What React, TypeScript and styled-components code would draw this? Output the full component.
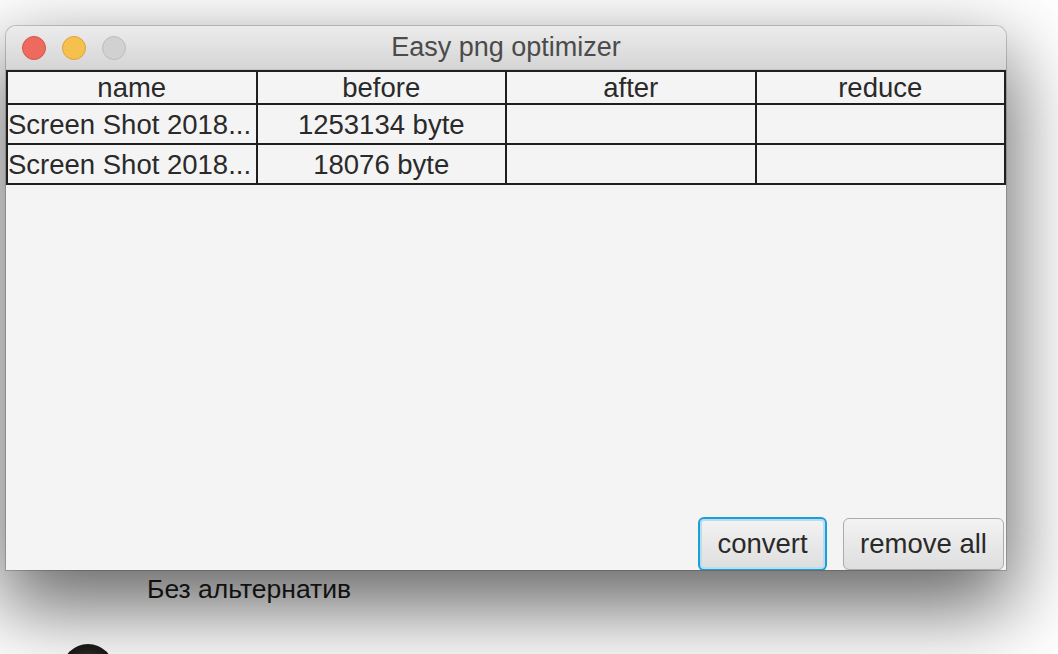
import React from "react";
import styled, { createGlobalStyle } from "styled-components";

const Global = createGlobalStyle`
  html, body { margin: 0; padding: 0; background: #ffffff; }
  body { font-family: "Liberation Sans", Arial, sans-serif; overflow: hidden; }
`;

const Page = styled.div`
  width: 1058px;
  height: 654px;
  padding: 26px 0 0 6px;
  box-sizing: border-box;
  overflow: hidden;
`;

const Window = styled.div`
  width: 1000px;
  height: 544px;
  display: flex;
  flex-direction: column;
  background: #f4f4f4;
  border-radius: 10px 10px 0 0;
  box-shadow: 0 0 0 1px rgba(0, 0, 0, 0.18), 0 32px 80px 6px rgba(0, 0, 0, 0.6);
  overflow: hidden;
`;

const TitleBar = styled.div`
  height: 44px;
  flex: none;
  display: flex;
  align-items: center;
  position: relative;
  background: linear-gradient(#ececec, #d5d5d5);
  border-bottom: 1px solid #c4c4c4;
  box-sizing: border-box;
`;

const Lights = styled.div`
  display: flex;
  gap: 16px;
  padding-left: 16px;
`;

const Light = styled.span<{ $c: string; $b: string }>`
  width: 24px;
  height: 24px;
  border-radius: 50%;
  background: ${(p) => p.$c};
  border: 1px solid ${(p) => p.$b};
  box-sizing: border-box;
`;

const Title = styled.div`
  position: absolute;
  left: 0;
  right: 0;
  top: 0;
  bottom: 0;
  display: flex;
  align-items: center;
  justify-content: center;
  font-size: 27px;
  color: #4b4b4b;
  pointer-events: none;
`;

const Grid = styled.div`
  display: grid;
  grid-template-columns: repeat(4, 1fr);
  border-top: 2px solid #1f1f1f;
  border-left: 2px solid #1f1f1f;
  flex: none;
`;

const Cell = styled.div<{ $head?: boolean; $left?: boolean }>`
  height: ${(p) => (p.$head ? 33 : 40)}px;
  box-sizing: border-box;
  border-right: 2px solid #1f1f1f;
  border-bottom: 2px solid #1f1f1f;
  display: flex;
  align-items: center;
  justify-content: ${(p) => (p.$left ? "flex-start" : "center")};
  font-size: 27.5px;
  color: #2a2a2a;
  white-space: nowrap;
  overflow: hidden;
  padding-top: ${(p) => (p.$head ? 0 : 1)}px;
`;

const Spacer = styled.div`
  flex: 1;
`;

const ButtonRow = styled.div`
  display: flex;
  justify-content: flex-end;
  align-items: flex-end;
  gap: 16px;
  padding-right: 2px;
  margin-bottom: -1px;
`;

const Button = styled.button<{ $focused?: boolean; $w: number }>`
  width: ${(p) => p.$w}px;
  height: ${(p) => (p.$focused ? 54 : 52)}px;
  margin-bottom: ${(p) => (p.$focused ? 0 : 1)}px;
  font-family: "Liberation Sans", Arial, sans-serif;
  font-size: 27.5px;
  color: #2a2a2a;
  background: linear-gradient(#f3f3f3, #dedede);
  border: ${(p) => (p.$focused ? "2px solid #1b9fd9" : "1px solid #ababab")};
  box-shadow: ${(p) =>
    p.$focused ? "inset 0 0 0 2px #b9dcef" : "0 1px 0 rgba(0,0,0,0.05)"};
  border-radius: 6px;
  padding: 0;
  display: flex;
  align-items: center;
  justify-content: center;
`;

const Caption = styled.div`
  margin: 4px 0 0 141px;
  font-size: 26.5px;
  line-height: 30px;
  color: #111;
`;

const Avatar = styled.div`
  margin: 40px 0 0 56px;
  width: 52px;
  height: 52px;
  border-radius: 50%;
  background: radial-gradient(circle at 50% 62%, #c2b3a4 0 22%, #6b5f56 36%, #2a2624 52%, #1a1817 70%);
`;

export default function App() {
  const rows = [
    ["Screen Shot 2018...", "1253134 byte", "", ""],
    ["Screen Shot 2018...", "18076 byte", "", ""],
  ];
  return (
    <>
      <Global />
      <Page>
        <Window>
          <TitleBar>
            <Lights>
              <Light $c="#ee6a5e" $b="#d9534a" />
              <Light $c="#f6c04f" $b="#dea238" />
              <Light $c="#d1d1d1" $b="#bcbcbc" />
            </Lights>
            <Title>Easy png optimizer</Title>
          </TitleBar>
          <Grid>
            {["name", "before", "after", "reduce"].map((h) => (
              <Cell $head key={h}>
                {h}
              </Cell>
            ))}
            {rows.map((r, i) =>
              r.map((c, j) => (
                <Cell key={i + "-" + j} $left={j === 0}>
                  {c}
                </Cell>
              ))
            )}
          </Grid>
          <Spacer />
          <ButtonRow>
            <Button $focused $w={129}>convert</Button>
            <Button $w={161}>remove all</Button>
          </ButtonRow>
        </Window>
        <Caption>Без альтернатив</Caption>
        <Avatar />
      </Page>
    </>
  );
}
